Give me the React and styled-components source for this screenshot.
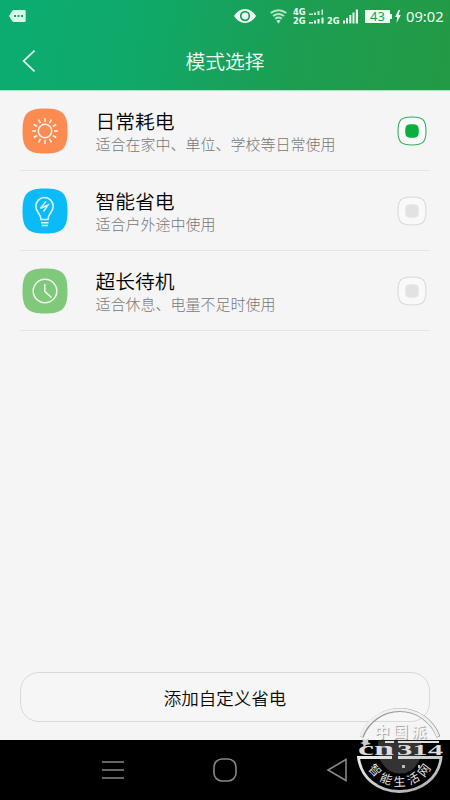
import React, { useState } from "react";
import styled, { createGlobalStyle } from "styled-components";

const GlobalStyle = createGlobalStyle`
  * {
    box-sizing: border-box;
  }

  body {
    margin: 0;
    background: #f5f5f5;
    font-family: "Noto Sans", "Noto Sans CJK SC", sans-serif;
  }

  svg {
    display: block;
    flex: none;
  }
`;

const Screen = styled.div`
  position: relative;
  display: flex;
  flex-direction: column;
  width: 450px;
  height: 800px;
  overflow: hidden;
  background: #f5f5f5;
`;

const Header = styled.header`
  height: 90px;
  color: #effff4;
  background: linear-gradient(100deg, #0bac70 0%, #0fa96a 30%, #1c9e52 65%, #239a44 100%);
  box-shadow: 0 1px 0 #a9e3c4;
`;

const StatusBar = styled.div`
  display: flex;
  align-items: center;
  height: 32px;
  padding: 0 7px 0 9px;
`;

const StatusIcons = styled.div`
  display: flex;
  align-items: center;
  margin-left: auto;
`;

const WifiSvg = styled.svg`
  margin-left: 14px;
`;

const NetworkSvg = styled.svg`
  margin-left: 6px;
`;

const Battery = styled.div`
  position: relative;
  width: 25px;
  height: 13px;
  margin-left: 6px;
  background: #effff4;
  color: #239a48;
  font-size: 13px;
  line-height: 13px;
  text-align: center;

  &::after {
    content: "";
    position: absolute;
    top: 4px;
    right: -2px;
    width: 2px;
    height: 5px;
    background: #effff4;
  }
`;

const BoltSvg = styled.svg`
  margin-left: 5px;
`;

const Clock = styled.span`
  width: 37px;
  margin-left: 5px;
  font-family: "Noto Sans", sans-serif;
  font-size: 14.7px;
  line-height: 20px;
  white-space: nowrap;
`;

const TitleBar = styled.div`
  display: grid;
  grid-template-columns: 60px 1fr 60px;
  align-items: center;
  height: 57px;
`;

const BackButton = styled.button`
  padding: 0 0 0 22px;
  border: 0;
  background: none;
  color: inherit;
`;

const Title = styled.h1`
  margin: 0;
  font-family: "Noto Sans CJK SC", sans-serif;
  font-size: 19.8px;
  font-weight: 350;
  line-height: 30px;
  text-align: center;
`;

const ModeList = styled.ul`
  flex: 1;
  margin: 0;
  padding: 1px 20px 0;
  list-style: none;
`;

const ModeRow = styled.li`
  display: flex;
  align-items: center;
  height: 80px;
  padding: 0 3px 0 2px;
  border-bottom: 1px solid #e5e5e5;
  cursor: pointer;
`;

const ModeText = styled.div`
  flex: 1;
  margin-left: 27.5px;
  padding-top: 3px;
  font-family: "Noto Sans CJK SC", sans-serif;
  white-space: nowrap;
`;

const ModeName = styled.div`
  color: #000;
  font-size: 19.8px;
  font-weight: 350;
  line-height: 24px;
`;

const ModeHint = styled.div`
  color: #777;
  font-size: 15px;
  font-weight: 300;
  line-height: 22px;
`;

const Radio = styled.svg`
  color: ${(p) => (p.$checked ? "#0bb03c" : "#e2e2e2")};
  stroke: ${(p) => (p.$checked ? "#38ae62" : "#d9d9d9")};
`;

const Footer = styled.div`
  padding: 0 20px 18px;
`;

const AddButton = styled.button`
  display: block;
  width: 410px;
  height: 50px;
  padding: 0;
  border: 1px solid #d9d9d9;
  border-radius: 19px;
  background: #f6f6f6;
  color: #080808;
  font-family: "Noto Sans CJK SC", sans-serif;
  font-size: 17.5px;
  font-weight: 350;
`;

const NavBar = styled.nav`
  display: flex;
  align-items: center;
  justify-content: center;
  gap: 88px;
  height: 60px;
  background: #000;
`;

const Stamp = styled.svg`
  position: absolute;
  left: 354px;
  top: 704px;
  pointer-events: none;
`;

const MessageIcon = () => (
  <svg width="17" height="12" viewBox="0 0 17 12">
    <path d="M5 0h10.500q1.200 0 1.200 1.200v9.600q0 1.200-1.200 1.200H5Q3.700 12 3 10.800L0 6l3-4.800Q3.700 0 5 0Z" fill="#d7fbe9" />
    <path d="M5 5h2v2H5zM8.500 5h2v2h-2zM12 5h2v2h-2z" fill="#2b9c70" />
  </svg>
);

const EyeIcon = () => (
  <svg width="22" height="14" viewBox="0 0 22 14">
    <path d="M0 7Q4.500 0 11 0T22 7q-4.500 7-11 7T0 7Z" fill="currentColor" />
    <circle cx="11" cy="7" r="4.300" fill="none" stroke="#189f5b" strokeWidth="1.700" />
  </svg>
);

const WifiIcon = () => (
  <WifiSvg width="17" height="15" viewBox="0 0 17 15">
    <g fill="none" stroke="#b5e8c7" strokeWidth="1.900">
      <path d="M.7 4.100Q8.500-1.700 16.300 4.100" />
      <path d="M3 7q5.500-4.200 11 0" />
      <path d="M5.200 9.800q3.300-2.500 6.600 0" />
    </g>
    <path d="M6.400 11.500q2.100-1.200 4.200 0L8.500 14.500Z" fill="#dcfae6" />
  </WifiSvg>
);

const NetworkText = ({ x, y, children }) => (
  <text x={x} y={y} fontFamily="DejaVu Sans" fontWeight="700" fontSize="8" textLength="12.500" lengthAdjust="spacingAndGlyphs">
    {children}
  </text>
);

const NetworkIcon = () => (
  <NetworkSvg width="66" height="16" viewBox="0 0 66 16" fill="currentColor">
    <NetworkText x="0" y="7">4G</NetworkText>
    <NetworkText x="0" y="15.500">2G</NetworkText>
    <NetworkText x="34" y="15.500">2G</NetworkText>
    <path d="M16 5.500h4V7h-4zM21 4.500h2V7h-2zM24.500 3h2v4h-2zM28.500 1.500H30V7h-1.500z" opacity=".8" />
    <path d="M16 14h4v1.500h-4zM21 12.500h2v3h-2zM24.500 11h2v4.500h-2zM28.500 9.500h2v6h-2z" />
    <path d="M50 12.500h2v3h-2zM53 10h2v5.500h-2zM56.300 7h2v8.500h-2zM59.500 4.500h2v11h-2zM62.800 1.500H65v14h-2.200z" />
  </NetworkSvg>
);

const BoltIcon = () => (
  <BoltSvg width="6" height="13" viewBox="0 0 6 13">
    <path d="M3.500 0 .2 7h2L1.500 13 5.800 5H3.600L5 0Z" fill="currentColor" />
  </BoltSvg>
);

const Tile = ({ color, children }) => (
  <svg width="46" height="46" viewBox="0 0 46 46">
    <path d="M.5 23C.5 5.500 5.500.5 23 .5S45.500 5.500 45.500 23 40.500 45.500 23 45.500.5 40.500.5 23Z" fill={color} />
    <g fill="none" stroke="#fff" strokeOpacity=".9" strokeWidth="1.500">
      {children}
    </g>
  </svg>
);

const SUN_RAYS = Array.from({ length: 12 }, (_, i) => i * 30);

const SunIcon = () => (
  <Tile color="#fc8b52">
    <circle cx="23" cy="23" r="6.700" />
    {SUN_RAYS.map((angle) => (
      <path key={angle} d="M23 10v4" transform={`rotate(${angle} 23 23)`} />
    ))}
  </Tile>
);

const BulbIcon = () => (
  <Tile color="#0bbbf7">
    <path d="M19 31.500c0-6-5.200-7.500-5.200-13a8.700 9 0 0 1 17.400 0c0 5.500-5.200 7-5.200 13ZM19 34.800h7.500M19.800 37.600h6" />
    <path d="m24 13.500-5.500 6.800 7.500-3.300-4.500 6.500" strokeWidth="1.400" />
  </Tile>
);

const ClockIcon = () => (
  <Tile color="#80c97a">
    <circle cx="23" cy="23" r="11.800" />
    <path d="M22.800 16v7.500l6.700 6" />
  </Tile>
);

const MODES = [
  { id: "daily", name: "日常耗电", hint: "适合在家中、单位、学校等日常使用", Icon: SunIcon },
  { id: "smart", name: "智能省电", hint: "适合户外途中使用", Icon: BulbIcon },
  { id: "standby", name: "超长待机", hint: "适合休息、电量不足时使用", Icon: ClockIcon },
];

const RadioMark = ({ checked }) => (
  <Radio $checked={checked} width="30" height="30" viewBox="0 0 30 30">
    <path d="M1 15C1 4 4 1 15 1s14 3 14 14-3 14-14 14S1 26 1 15Z" fill="#f9f9f9" strokeWidth="1.100" />
    <path d="M8.200 15c0-5.500 1.300-6.800 6.800-6.800s6.800 1.300 6.800 6.800-1.300 6.800-6.800 6.800S8.200 20.500 8.200 15Z" fill="currentColor" stroke="none" />
  </Radio>
);

const SiteStamp = () => (
  <Stamp width="94" height="94" viewBox="354 704 94 94">
    <defs>
      <path id="stamp-curve" d="M363 749.500A36.500 36.500 0 0 0 436 749.500" />
      <linearGradient id="stamp-ring" x1="0" y1="0" x2="1" y2="1">
        <stop offset="0" stopColor="#eee" />
        <stop offset=".5" stopColor="#c9c9c9" />
        <stop offset="1" stopColor="#aaa" />
      </linearGradient>
    </defs>
    <path d="M378.500 740.500a23.500 31 0 0 0 0 16q7 17 21.500 17t21-17a23.500 31 0 0 0 0-16Z" fill="#333" />
    <g fill="none">
      <path d="M361.500 737A41 41 0 0 1 438.500 737" stroke="#999" strokeWidth="4" />
      <path d="M361 736.500A41 41 0 0 1 438 736.500" stroke="#f0f0f0" strokeWidth="2.800" />
      <path d="M392 757.500H358.500C361 778 378 791.500 399.500 791.500S439 778 441 757.500H398" stroke="url(#stamp-ring)" strokeWidth="2.800" />
      <path d="M385 742H394M398 742H439" stroke="#ddd" strokeWidth="1.800" />
    </g>
    <g fontFamily="Noto Sans CJK SC" fontWeight="700" fontSize="15">
      <text x="375.500" y="738" textLength="52" fill="#aaa">中国派</text>
      <text x="374.500" y="737" textLength="52" fill="#f4f4f4">中国派</text>
    </g>
    <path d="m362 739 4 1 3-2-1 4 3 2-5 1-2 3-1-4-3-1 3-1Z" fill="#ccc" />
    <g fontFamily="Liberation Serif" fontWeight="700" fill="#ddd">
      <text x="358" y="754.500" fontSize="18.500" textLength="36" lengthAdjust="spacingAndGlyphs">cn</text>
      <text x="397" y="754.500" fontSize="14.500" textLength="46" lengthAdjust="spacingAndGlyphs">314</text>
    </g>
    <path d="M402 765h3v3h-3zM418 765h2v3h-2z" fill="#bbb" />
    <text fontFamily="Noto Sans CJK SC" fontSize="12" letterSpacing="3.800" fill="#e5e5e5">
      <textPath href="#stamp-curve" startOffset="52%" textAnchor="middle">智能生活网</textPath>
    </text>
  </Stamp>
);

const App = () => {
  const [mode, setMode] = useState("daily");

  return (
    <>
      <GlobalStyle />
      <Screen>
        <Header>
          <StatusBar>
            <MessageIcon />
            <StatusIcons>
              <EyeIcon />
              <WifiIcon />
              <NetworkIcon />
              <Battery>43</Battery>
              <BoltIcon />
              <Clock>09:02</Clock>
            </StatusIcons>
          </StatusBar>
          <TitleBar>
            <BackButton aria-label="返回">
              <svg width="14" height="22" viewBox="0 0 14 22" fill="none" stroke="currentColor" strokeWidth="1.700">
                <path d="M12.500.7 1.700 11l10.800 10.300" />
              </svg>
            </BackButton>
            <Title>模式选择</Title>
          </TitleBar>
        </Header>
        <ModeList>
          {MODES.map(({ id, name, hint, Icon }) => (
            <ModeRow key={id} onClick={() => setMode(id)}>
              <Icon />
              <ModeText>
                <ModeName>{name}</ModeName>
                <ModeHint>{hint}</ModeHint>
              </ModeText>
              <RadioMark checked={mode === id} />
            </ModeRow>
          ))}
        </ModeList>
        <Footer>
          <AddButton>添加自定义省电</AddButton>
        </Footer>
        <NavBar>
          <svg width="24" height="24" viewBox="0 0 24 24" stroke="#888" strokeWidth="1.600">
            <path d="M1 4h22M1 12h22M1 20h22" />
          </svg>
          <svg width="24" height="24" viewBox="0 0 24 24" fill="none" stroke="#888" strokeWidth="1.600">
            <rect x="1" y="1" width="22" height="22" rx="8" />
          </svg>
          <svg width="24" height="24" viewBox="0 0 24 24" fill="none" stroke="#888" strokeWidth="1.600">
            <path d="M21 1.500v21L3 12Z" />
          </svg>
        </NavBar>
        <SiteStamp />
      </Screen>
    </>
  );
};

export default App;
